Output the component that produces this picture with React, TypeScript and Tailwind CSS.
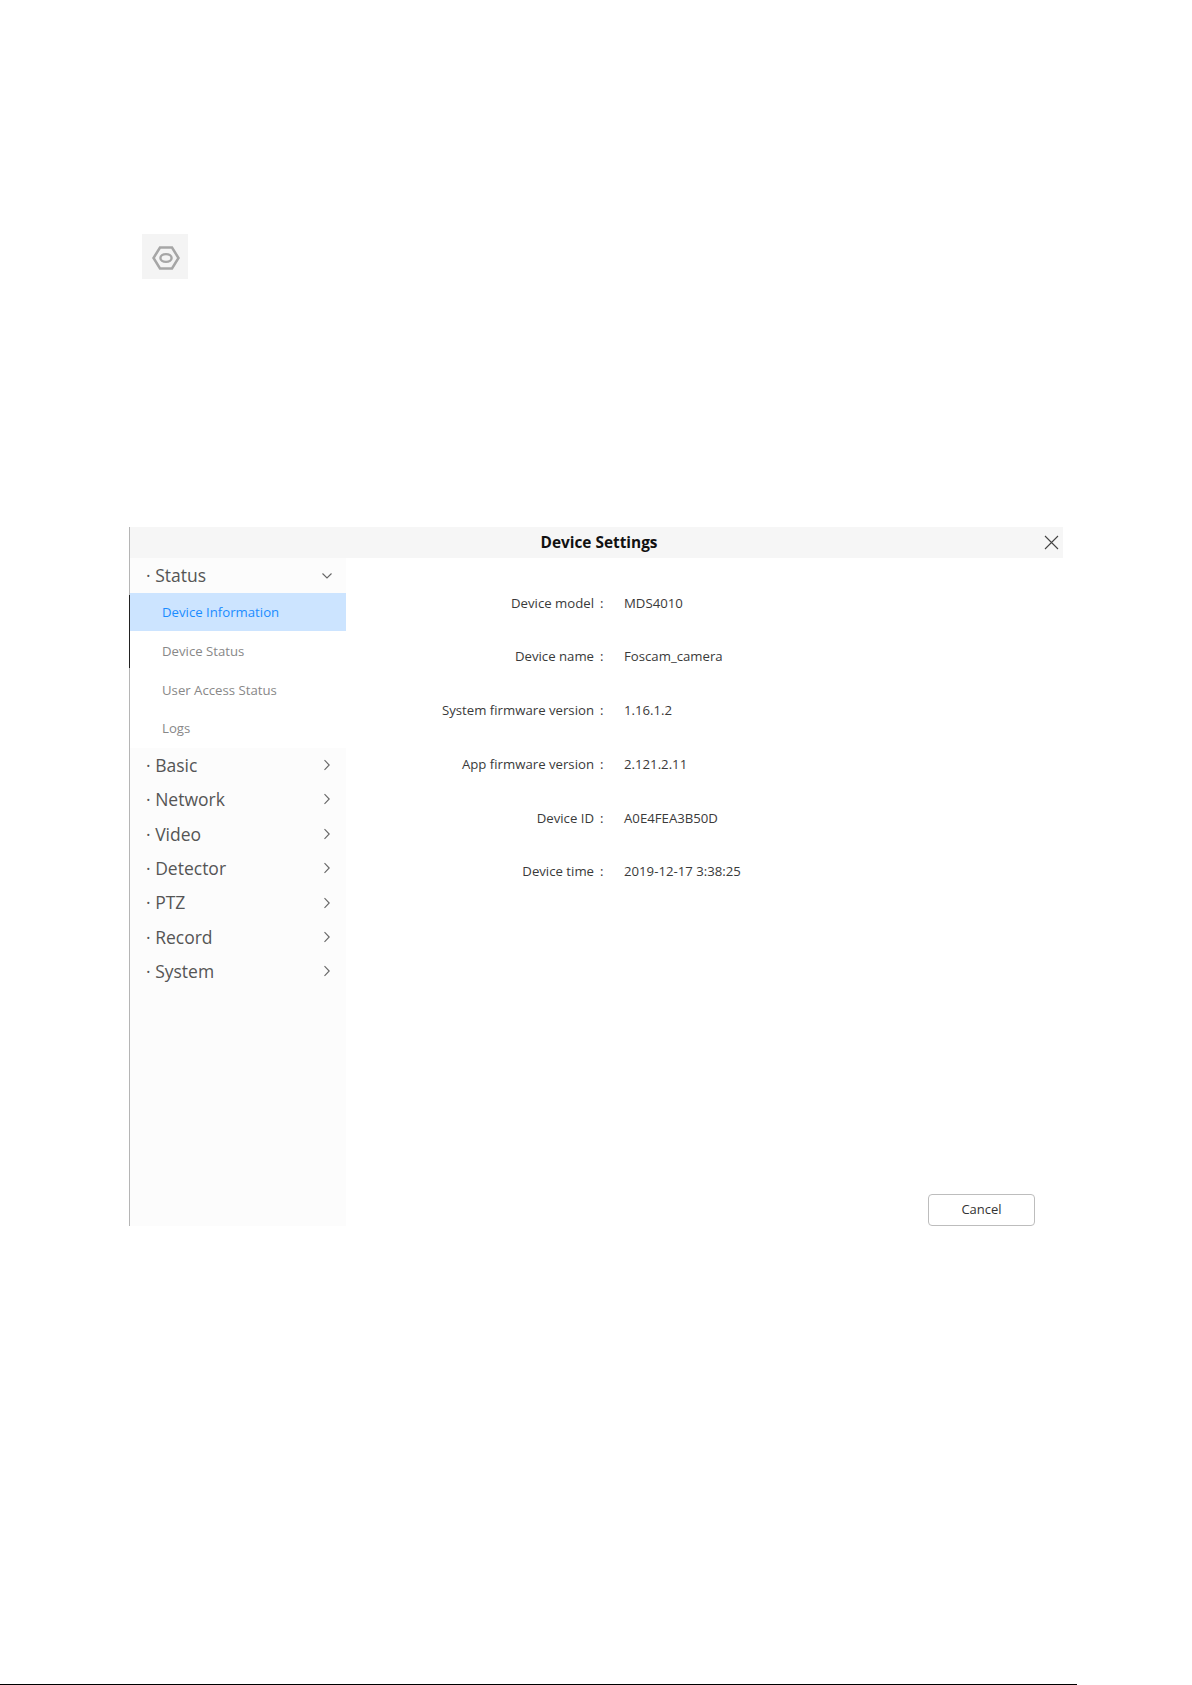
const SUB_ITEMS = ['Device Information', 'Device Status', 'User Access Status', 'Logs'];
const GROUPS = ['Basic', 'Network', 'Video', 'Detector', 'PTZ', 'Record', 'System'];
const INFO = [
  ['Device model', 'MDS4010'],
  ['Device name', 'Foscam_camera'],
  ['System firmware version', '1.16.1.2'],
  ['App firmware version', '2.121.2.11'],
  ['Device ID', 'A0E4FEA3B50D'],
  ['Device time', '2019-12-17 3:38:25'],
];

function Chevron({ open }: { open?: boolean }) {
  return (
    <svg width="12" height="12" viewBox="0 0 12 12" fill="none" stroke="#666" strokeWidth="1.1">
      {open ? <path d="M1.5 3.5 6 8l4.5-4.5" /> : <path d="M3.5 1.2 8.2 6l-4.7 4.8" />}
    </svg>
  );
}

function GroupRow({ label, open }: { label: string; open?: boolean }) {
  return (
    <div className={`flex items-center justify-between pl-[16px] pr-[13px] text-[17.5px] text-[#555] ${open ? 'h-[35px]' : 'h-[34.4px]'}`}>
      <span>· {label}</span>
      <Chevron open={open} />
    </div>
  );
}

export default function App() {
  return (
    <div className="flex h-[1685px] flex-col bg-white font-['Open_Sans','Noto_Sans',sans-serif]">
      {/* settings icon */}
      <div className="ml-[142px] mt-[234px] flex h-[45px] w-[46px] items-center justify-center bg-[#f4f4f4] pt-[3px] pl-[1px]">
        <svg className="blur-[0.6px]" width="28" height="24" viewBox="0 0 28 24" fill="none" stroke="#a6a6a6">
          <path d="M8 1.5h12L26.5 12 20 22.5H8L1.5 12z" strokeWidth="2.5" />
          <ellipse cx="14" cy="12" rx="5.6" ry="3.9" strokeWidth="2.4" />
        </svg>
      </div>

      {/* dialog */}
      <div className="ml-[129px] mt-[248px] flex h-[699px] w-[934px] flex-col border-l border-l-[#b5b5b5]">
        <div className="relative flex h-[31px] shrink-0 items-center justify-center bg-[#f6f6f6] pl-[5px] text-[15.4px] font-bold text-[#111]">
          Device Settings
          <svg className="absolute right-[4px] top-[8px]" width="15" height="15" viewBox="0 0 15 15" stroke="#444" strokeWidth="1.1">
            <path d="M1 1l13 13M14 1 1 14" />
          </svg>
        </div>

        <div className="flex min-h-0 flex-1">
          <div className="relative w-[216px] shrink-0 bg-[#fcfcfc]">
            <div className="absolute left-[-1px] top-[37px] h-[73px] w-px bg-[#222]" />
            <GroupRow label="Status" open />
            <div className="bg-white">
              {SUB_ITEMS.map((item, i) => (
                <div
                  key={item}
                  className={`flex items-center pl-[32px] pt-[2px] text-[13.2px] ${i === 0 ? 'h-[38.4px] bg-[#cce4ff] text-[#1a8cff]' : 'h-[38.8px] text-[#888]'}`}
                >
                  {item}
                </div>
              ))}
            </div>
            {GROUPS.map((g) => (
              <GroupRow key={g} label={g} />
            ))}
          </div>

          <div className="flex flex-1 flex-col pt-[18.5px]">
            <div className="flex flex-col">
              {INFO.map(([label, value]) => (
                <div key={label} className="flex h-[53.8px] items-center text-[13.2px] text-[#3a3a3a]">
                  <div className="w-[248px] text-right">{label}</div>
                  <div className="w-[30px] pl-[6px]">:</div>
                  <div>{value}</div>
                </div>
              ))}
            </div>
            <button className="ml-[582px] mt-auto h-[32px] w-[107px] rounded-[4px] border border-[#bdbdbd] bg-white text-[13px] text-[#333]">
              Cancel
            </button>
          </div>
        </div>
      </div>

      {/* page rule */}
      <div className="mt-auto h-[1px] w-[1077px] bg-black" />
    </div>
  );
}
